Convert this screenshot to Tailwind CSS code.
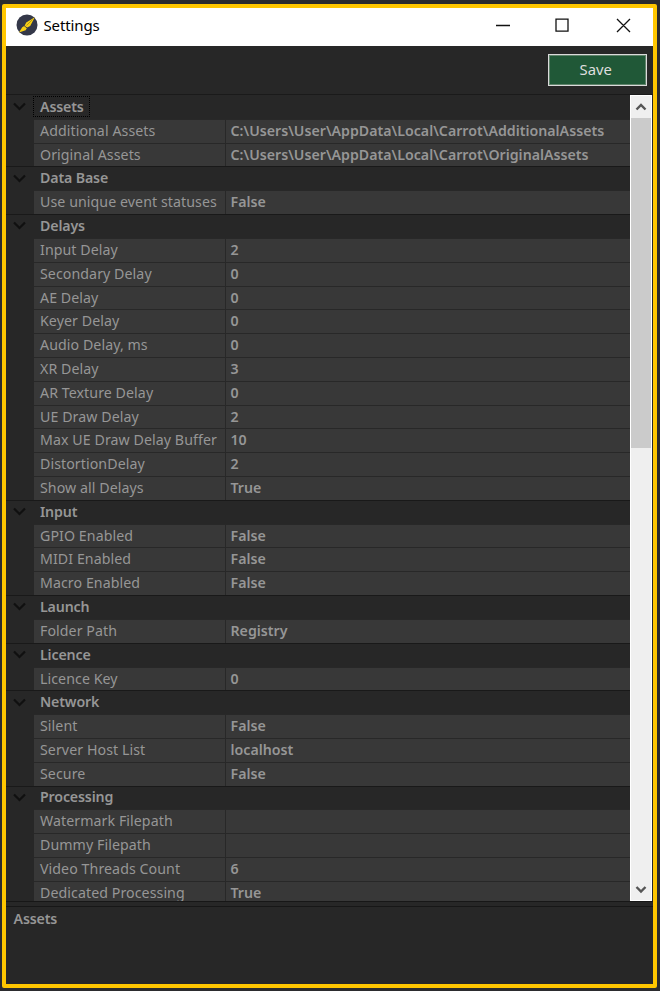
<!DOCTYPE html>
<html lang="en">
<head>
<meta charset="utf-8">
<title>Settings</title>
<script src="https://cdn.jsdelivr.net/npm/@tailwindcss/browser@4"></script>
</head>
<body class="h-[991px] w-[660px] overflow-hidden bg-[#2b2b2e] pt-[3.5px] pl-[2px] font-['Noto_Sans','Open_Sans',sans-serif]">
<main class="flex h-[984px] w-[655px] flex-col rounded-[2px] border-4 border-[#ffc600] bg-[#272727] text-[14.2px] text-[#969696]">
  <header class="flex h-[38.5px] shrink-0 items-center bg-white pl-[9.5px] text-black">
    <svg class="mt-[-4px] size-[22px]" viewBox="0 0 22 22"><circle cx="11" cy="11" r="10.5" fill="#343849"/><path d="M3 18.5 6.2 13.2 8.6 11.8 10.2 8.6 18.8 3.2 14.2 12 11.2 13.6 9.6 16.2Z" fill="#f8cf13"/><path d="M8.2 11.8 11.2 14" stroke="#343849" stroke-width=".9"/><path d="M10.5 11.5 16.5 5.5" stroke="#8a7418" stroke-width=".6"/></svg>
    <h1 class="mt-[-3px] ml-[6px] text-[15px] tracking-[-0.12px]">Settings</h1>
    <svg class="mt-[-3px] mr-[1.5px] ml-auto h-[16px] w-[156px]" viewBox="0 0 156 16" fill="none" stroke="#111" stroke-width="1.3"><path d="M0 8.5H14M60 2.2H72V14.2H60ZM121 2 134 15M134 2 121 15"/></svg>
  </header>
  <section class="flex h-[49px] shrink-0 items-start justify-end pt-[8px] pr-[6px] shadow-[inset_0_-1px_#1a1a1a]">
    <button class="h-[32px] w-[99.5px] border border-[#dadada] bg-[#205837] pr-[3px] pb-[2px] text-[14.8px] text-[#dedede] outline-1 -outline-offset-2 outline-[#9fae9f]/50">Save</button>
  </section>
  <section class="flex h-[805.5px] shrink-0">
    <div id="grid" class="min-w-0 flex-1 overflow-hidden"></div>
    <aside class="mr-px flex w-[22.5px] shrink-0 flex-col items-center border border-white bg-[#efefef]">
      <svg class="h-[22px] w-[12px] shrink-0" viewBox="0 0 12 22" fill="none" stroke="#555" stroke-width="2.4"><path d="M1.5 13.5 6 9 10.5 13.5"/></svg>
      <div class="h-[330px] w-[20px] shrink-0 bg-[#cbcbcb]"></div>
      <svg class="mt-auto h-[22px] w-[12px] shrink-0" viewBox="0 0 12 22" fill="none" stroke="#555" stroke-width="2.4"><path d="M1.5 9 6 13.5 10.5 9"/></svg>
    </aside>
  </section>
  <div class="h-[6px] shrink-0 border-y border-[#171717]"></div>
  <footer class="pt-[2px] pl-[7.5px] font-semibold leading-[20px] tracking-[-0.15px]">Assets</footer>
</main>
<script>
const groups = [
  ["Assets", [["Additional Assets", "C:\\Users\\User\\AppData\\Local\\Carrot\\AdditionalAssets"], ["Original Assets", "C:\\Users\\User\\AppData\\Local\\Carrot\\OriginalAssets"]]],
  ["Data Base", [["Use unique event statuses", "False"]]],
  ["Delays", [["Input Delay", "2"], ["Secondary Delay", "0"], ["AE Delay", "0"], ["Keyer Delay", "0"], ["Audio Delay, ms", "0"], ["XR Delay", "3"], ["AR Texture Delay", "0"], ["UE Draw Delay", "2"], ["Max UE Draw Delay Buffer", "10"], ["DistortionDelay", "2"], ["Show all Delays", "True"]]],
  ["Input", [["GPIO Enabled", "False"], ["MIDI Enabled", "False"], ["Macro Enabled", "False"]]],
  ["Launch", [["Folder Path", "Registry"]]],
  ["Licence", [["Licence Key", "0"]]],
  ["Network", [["Silent", "False"], ["Server Host List", "localhost"], ["Secure", "False"]]],
  ["Processing", [["Watermark Filepath", ""], ["Dummy Filepath", ""], ["Video Threads Count", "6"], ["Dedicated Processing", "True"]]]
];
document.getElementById("grid").innerHTML = groups.map(([name, rows], i) => `
  <div class="flex h-[23.82px] items-center border-t ${i ? "border-[#191919]" : "border-transparent"} font-semibold">
    <svg class="mt-[-1px] ml-[7px] h-[9px] w-[13px]" viewBox="0 0 13 9" fill="none" stroke="#101010" stroke-width="2.2"><path d="M1 1.5 6.5 7 12 1.5"/></svg>
    <span class="mt-[-2px] ml-[7px] border border-dotted ${i ? "border-transparent" : "border-black"} pr-[5px] pl-[6px] leading-[19px] tracking-[-0.15px]">${name}</span>
  </div>` + rows.map(([k, v]) => `
  <div class="ml-[28px] flex h-[23.82px] border-t border-[#282828] bg-[#383838] leading-[22px] whitespace-nowrap">
    <span class="w-[192px] shrink-0 border-r border-[#282828] pl-[6px] tracking-[0.07px]">${k}</span><span class="pl-[4.5px] font-semibold">${v}</span>
  </div>`).join("")).join("");
</script>
</body>
</html>
